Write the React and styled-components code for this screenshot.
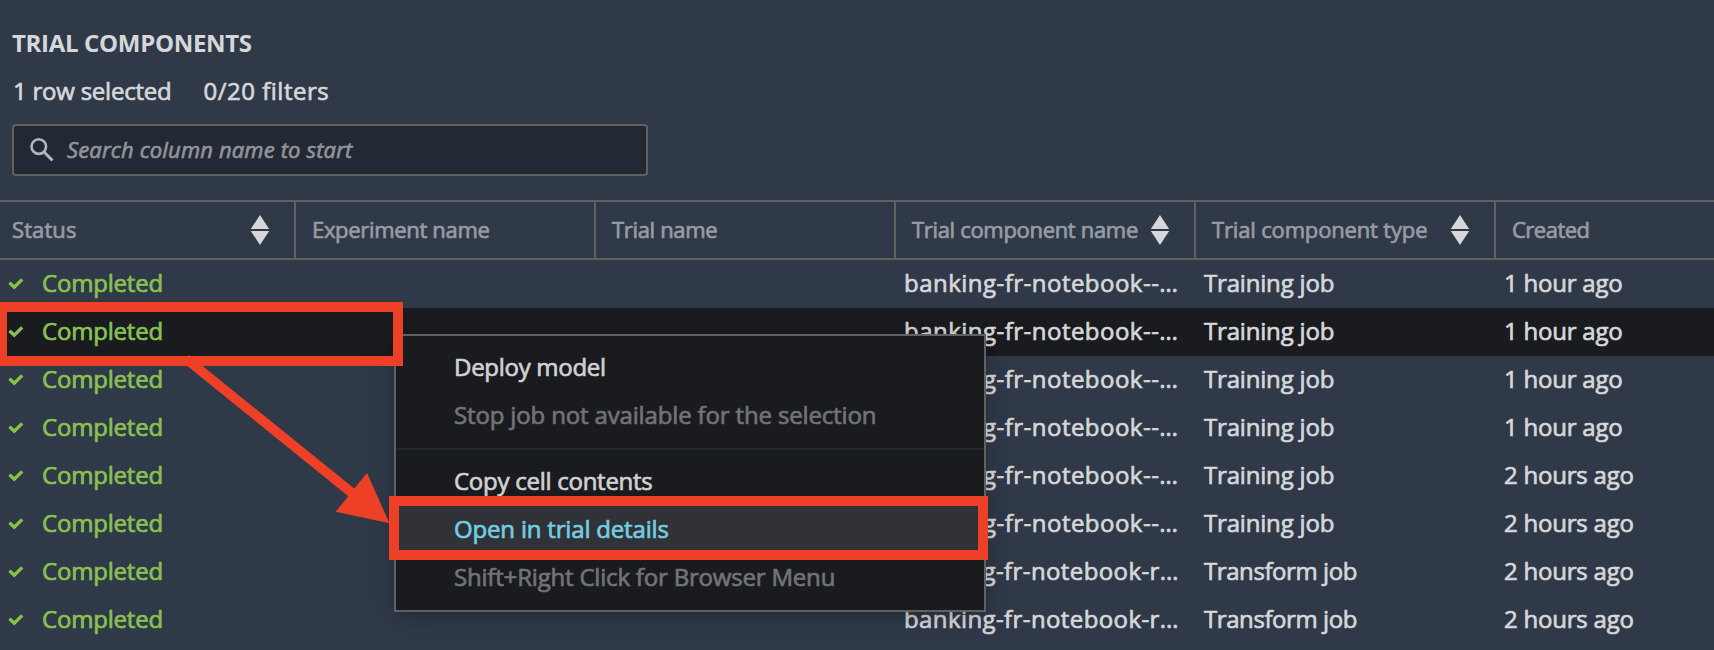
import React from 'react';
import styled, { createGlobalStyle } from 'styled-components';

const line = '#616060';
const accent = '#ed4026';

const GlobalStyle = createGlobalStyle`
  *, *::before, *::after { box-sizing: border-box; }
  body {
    margin: 0;
    overflow: hidden;
    background: #303948;
    color: #d6d7da;
    font-family: 'Open Sans', 'Noto Sans', sans-serif;
    font-size: 24px;
  }
`;

const Page = styled.main`
  position: relative;
  width: 1714px;
  height: 650px;
  overflow: hidden;
`;

const Label = styled.span`
  white-space: nowrap;
  letter-spacing: ${({ $track = 0 }) => $track}px;
  -webkit-text-stroke: 0.7px currentColor;
`;

const Heading = styled.h1`
  margin: 0;
  padding: 23px 13px 0 12px;
  font-size: 24px;
  line-height: 40px;
  font-weight: 700;
  letter-spacing: -0.32px;
`;

const Summary = styled.div`
  display: flex;
  gap: 32px;
  padding: 8px 0 0 13px;
  line-height: 40px;
`;

const SearchBox = styled.div`
  display: flex;
  align-items: center;
  gap: 13px;
  width: 636px;
  height: 52px;
  margin: 13px 0 24px 12px;
  padding: 0 16px;
  border: 2px solid ${line};
  border-radius: 4px;
  background: #222934;
  color: #909499;
  font-size: 22px;
  line-height: 46px;
  font-style: italic;
`;

const SearchIcon = styled.svg`
  width: 24px;
  height: 24px;
  flex: none;
  color: #b4b7bb;
`;

const SearchHint = styled(Label)`
  padding-bottom: 2px;
`;

const gridColumns = '296px 300px 300px 300px 300px 218px';

const HeaderRow = styled.div`
  display: grid;
  grid-template-columns: ${gridColumns};
  height: 60px;
  border-top: 2px solid ${line};
  border-bottom: 2px solid ${line};
`;

const HeaderCell = styled.div`
  display: flex;
  align-items: flex-start;
  justify-content: space-between;
  padding: 0 24px 0 ${({ $first }) => ($first ? 12 : 16)}px;
  border-right: 2px solid ${line};
  color: #979ca3;
  font-size: 22px;
  line-height: 54px;
  &:last-child { border-right: 0; }
`;

const SortIcon = styled.svg`
  width: 20px;
  height: 30px;
  margin-top: 13px;
  flex: none;
  fill: #d6d7da;
`;

const Row = styled.div`
  display: grid;
  grid-template-columns: ${gridColumns};
  height: 48px;
  line-height: 46px;
  background: ${({ $selected }) => ($selected ? '#1a1b1f' : 'transparent')};
`;

const Cell = styled.div`
  padding-left: ${({ $inset = 8 }) => $inset}px;
  overflow: hidden;
  white-space: nowrap;
`;

const StatusCell = styled(Cell)`
  display: flex;
  align-items: flex-start;
  gap: 18px;
  color: #88c152;
`;

const CheckIcon = styled.svg`
  width: 16px;
  height: 14px;
  margin-top: 16px;
  flex: none;
`;

const Menu = styled.div`
  position: absolute;
  left: 394px;
  top: 334px;
  width: 592px;
  height: 278px;
  padding: 8px 0;
  border: 2px solid ${line};
  background: #1a1b1f;
  box-shadow: 0 6px 10px -2px rgba(0, 0, 0, 0.12), 0 4px 36px rgba(0, 0, 0, 0.16);
`;

const menuColors = {
  normal: '#d1d1d2',
  disabled: '#727376',
  active: '#73cde0',
};

const MenuItem = styled.div`
  height: 48px;
  padding-left: 58px;
  line-height: 46px;
  color: ${({ $state = 'normal' }) => menuColors[$state]};
  background: ${({ $state }) => ($state === 'active' ? '#313237' : 'transparent')};
`;

const MenuDivider = styled.div`
  height: 2px;
  margin: 8px 0;
  background: #222831;
`;

const Callout = styled.div`
  position: absolute;
  left: ${({ $x }) => $x}px;
  top: ${({ $y }) => $y}px;
  width: ${({ $w }) => $w}px;
  height: 64px;
  border: 10px solid ${accent};
`;

const Arrow = styled.svg`
  position: absolute;
  left: 180px;
  top: 350px;
  width: 212px;
  height: 180px;
`;

const columns = [
  { name: 'Status', track: 0.1, sortable: true },
  { name: 'Experiment name', track: -0.32 },
  { name: 'Trial name', track: -0.33 },
  { name: 'Trial component name', track: -0.32, sortable: true },
  { name: 'Trial component type', track: -0.16, sortable: true },
  { name: 'Created', track: -0.5 },
];

const components = {
  training: { name: 'banking-fr-notebook--…', nameTrack: 0.48, type: 'Training job', typeTrack: -0.18 },
  transform: { name: 'banking-fr-notebook-r…', nameTrack: 0.4, type: 'Transform job', typeTrack: -0.42 },
};

const rows = [
  { kind: 'training', created: '1 hour ago' },
  { kind: 'training', created: '1 hour ago', selected: true },
  { kind: 'training', created: '1 hour ago' },
  { kind: 'training', created: '1 hour ago' },
  { kind: 'training', created: '2 hours ago' },
  { kind: 'training', created: '2 hours ago' },
  { kind: 'transform', created: '2 hours ago' },
  { kind: 'transform', created: '2 hours ago' },
];

function Sort() {
  return (
    <SortIcon viewBox="0 0 20 30">
      <path d="M10 0 19.2 14H.8ZM.8 16H19.2L10 30Z" />
    </SortIcon>
  );
}

function TrialRow({ row }) {
  const item = components[row.kind];
  return (
    <Row $selected={row.selected}>
      <StatusCell>
        <CheckIcon viewBox="0 0 16 14">
          <path d="M1.5 6.8 6.2 11.2 14.2 3.4" fill="none" stroke="currentColor" strokeWidth="3.4" />
        </CheckIcon>
        <Label $track={-0.2}>Completed</Label>
      </StatusCell>
      <Cell />
      <Cell />
      <Cell><Label $track={item.nameTrack}>{item.name}</Label></Cell>
      <Cell><Label $track={item.typeTrack}>{item.type}</Label></Cell>
      <Cell><Label $track={-0.22}>{row.created}</Label></Cell>
    </Row>
  );
}

export default function App() {
  return (
    <Page>
      <GlobalStyle />
      <Heading>TRIAL COMPONENTS</Heading>
      <Summary>
        <Label $track={-0.23}>1 row selected</Label>
        <Label $track={0.5}>0/20 filters</Label>
      </Summary>
      <SearchBox>
        <SearchIcon viewBox="0 0 24 24" fill="none" stroke="currentColor">
          <circle cx="8.8" cy="8.6" r="7.3" strokeWidth="2.6" />
          <path d="M14 14 22.5 22.5" strokeWidth="3" />
        </SearchIcon>
        <SearchHint $track={0.16}>Search column name to start</SearchHint>
      </SearchBox>
      <HeaderRow>
        {columns.map((column, index) => (
          <HeaderCell key={column.name} $first={index === 0}>
            <Label $track={column.track}>{column.name}</Label>
            {column.sortable && <Sort />}
          </HeaderCell>
        ))}
      </HeaderRow>
      {rows.map((row, index) => <TrialRow key={index} row={row} />)}

      <Menu>
        <MenuItem><Label $track={-0.28}>Deploy model</Label></MenuItem>
        <MenuItem $state="disabled"><Label $track={-0.15}>Stop job not available for the selection</Label></MenuItem>
        <MenuDivider />
        <MenuItem><Label $track={-0.26}>Copy cell contents</Label></MenuItem>
        <MenuItem $state="active"><Label $track={-0.18}>Open in trial details</Label></MenuItem>
        <MenuItem $state="disabled"><Label $track={-0.19}>Shift+Right Click for Browser Menu</Label></MenuItem>
      </Menu>

      <Callout $x={-3} $y={302} $w={406} />
      <Callout $x={389} $y={496} $w={599} />
      <Arrow viewBox="180 350 212 180" fill={accent}>
        <path d="M189 355 354.3 488.6 367 473 389.5 523.3 335.7 511.8 348.3 496.2 183 362.5Z" />
      </Arrow>
    </Page>
  );
}
